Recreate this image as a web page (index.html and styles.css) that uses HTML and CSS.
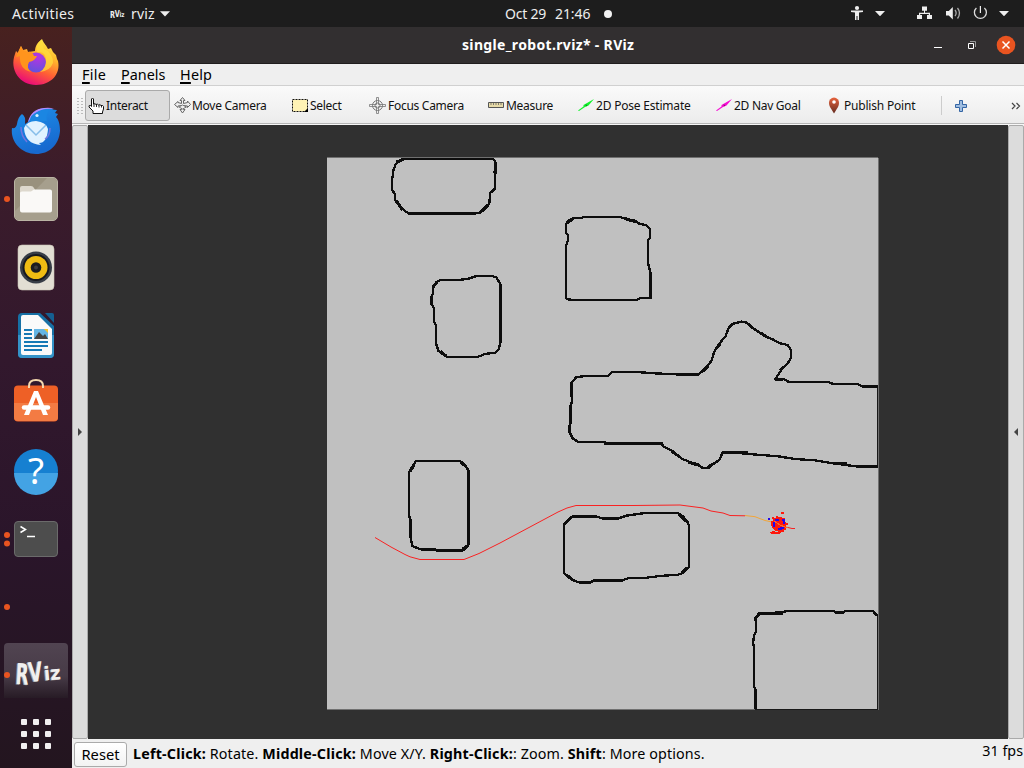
FILE: index.html
```html
<!DOCTYPE html>
<html lang="en">
<head>
<meta charset="utf-8">
<title>single_robot.rviz* - RViz</title>
<link rel="stylesheet" href="styles.css">
</head>
<body>
<div class="desktop">
  <header class="topbar">
    <span class="activities">Activities</span>
    <svg class="app-logo" width="16" height="12" viewBox="0 0 16 12"><g class="logo-mini"><text x="0" y="9.5" textLength="5" lengthAdjust="spacingAndGlyphs">R</text><text x="4.700" y="9" textLength="5" lengthAdjust="spacingAndGlyphs">V</text><text x="9.500" y="8.5" font-size="7" textLength="5" lengthAdjust="spacingAndGlyphs">iz</text></g></svg>
    <span class="app-name">rviz</span>
    <svg class="app-caret" width="10" height="6" viewBox="0 0 10 6"><path d="M0 .3h10L5 5.500z" fill="#eee"/></svg>
    <span class="date">Oct 29</span><span class="time">21:46</span><i class="notify"></i>
    <svg class="tray" width="170" height="27" viewBox="850 0 170 27" fill="#eee">
      <circle cx="857" cy="8" r="2.1"/><path d="M851 10.500h12v1.600l-4 .5V20h-1.500v-4h-1v4H855v-7.400l-4-.5z"/>
      <path d="M875 11h10l-5 5.200zM999 11h10l-5 5.200z"/>
      <path d="M922 6.500h5v4.300h-2v1.900h5v2.200h2v4h-5v-4h1.800v-1h-8.600v1h1.800v4h-5v-4h2v-2.200h5v-1.900h-2z"/>
      <path d="M946 11h2.800l4-4v12.500l-4-4H946z"/><path d="M955 10q2.300 3 0 6M957.500 8q4 5 0 10.500" fill="none" stroke="#aaa" stroke-width="1.300"/>
      <path d="M976.400 8a6 6 0 1 0 8 0" fill="none" stroke="#ddd" stroke-width="1.300"/><path d="M979.800 6h1.200v7h-1.200z"/>
    </svg>
  </header>
  <div class="workspace">
    <nav class="dock">
      <svg class="slot" viewBox="0 0 72 68">
        <defs>
          <linearGradient id="fox" x1=".8" y1="0" x2=".35" y2="1"><stop offset="0" stop-color="#fff14a"/><stop offset=".35" stop-color="#ffb52c"/><stop offset=".65" stop-color="#ff6034"/><stop offset="1" stop-color="#e9087b"/></linearGradient>
          <radialGradient id="globe" cx=".6" cy=".2" r=".9"><stop offset="0" stop-color="#b833e1"/><stop offset="1" stop-color="#5a55dc"/></radialGradient>
          <linearGradient id="bird" x1="0" y1="0" x2=".4" y2="1"><stop offset="0" stop-color="#1e91ea"/><stop offset="1" stop-color="#1769cf"/></linearGradient>
        </defs>
        <path d="M21 17l2 4 4-1 1 3 7-1c0-5 3-9 7-12 2 5 5 7 6 10l3-1 2 4 3 3 1 4 1 2c3 13-7 24-22 24C20 56 9 41 15 25l1-3 2 2z" fill="url(#fox)"/>
        <circle cx="36" cy="33.500" r="10" fill="url(#globe)"/>
        <path d="M21 17l2 4 5 2q4-1 6 4h3q-2 5-8 6-3 6 2 10-12-3-11-16l-4 1 3-7z" fill="#ff941d"/>
        <path d="M37 23q9-1 9 9 0 7-6 11 10-1 13-9 0-5-2-8l-3-4-4-2-3-9q-6 5-4 12z" fill="#ffdf3d" opacity=".7"/>
      </svg>
      <svg class="slot" viewBox="0 0 72 68">
        <path d="M12 31q4 1 5-4 1-7 5-10 4 2 3 10l3-2C31 16 38 10 48 11c5 1 6 2 9 2l-2 3 3 1-2 3c3 3 4 8 4 14-1 14-11 23-24 23-14 0-26-12-24-26" fill="url(#bird)"/>
        <path d="M28 25q3-13 16-14 6-1 10 1-12-1-18 4-3 5-8 9" fill="#b18cff"/>
        <path d="M29 25q2-8 8-10 6-3 13-3-5 6-3 12z" fill="#1b86e2"/>
        <circle cx="37" cy="18.500" r="1.600" fill="#d8f3ff"/>
        <path d="M24 31q3-7 12-7 10 1 12 8-1 14-9 14l2 2q-16-1-17-17" fill="#e1f2ff"/>
        <path d="M26 28l10 10 10-10" fill="none" stroke="#86bde9" stroke-width="1.500"/>
        <path d="M21 30q0 9 6 15M50 31q0 8-5 11" fill="none" stroke="#7375de" stroke-width="1.500"/>
      </svg>
      <svg class="slot" viewBox="0 0 72 68">
        <circle class="run" cx="7" cy="34" r="3"/>
        <rect x="14.500" y="12.500" width="43" height="43" rx="4.500" fill="#99917d" stroke="#bab4a4"/><path d="M15 46L47 13h7q3 1 3 4v35q-1 3-4 3H19q-4-1-4-4z" fill="#a69f8d"/>
        <path d="M20 23q0-2 2-2h9q2 0 3 2l1 2h15v5H20z" fill="#ddd8cd"/><path d="M20 28q0-1.500 2-1.500h9l3-2h16q2 0 2 2v19q0 2-2 2H22q-2 0-2-2z" fill="#faf9f7"/>
      </svg>
      <svg class="slot" viewBox="0 0 72 68">
        <rect x="18" y="12" width="36" height="45" rx="4" fill="#e2ded3" stroke="#c9c2b5" stroke-width=".6"/>
        <circle cx="36" cy="34.500" r="16" fill="#373d46"/><circle cx="36" cy="34.500" r="13.500" fill="#17191f"/><circle cx="36" cy="34.500" r="11.500" fill="#efbc13"/><circle cx="36" cy="34.500" r="5.300" fill="#1c1d20"/><circle cx="36" cy="34.500" r="2" fill="#3d3d3d"/>
      </svg>
      <svg class="slot" viewBox="0 0 72 68">
        <path d="M22 12h18l14 13v28q0 4-4 4H22q-4 0-4-4V16q0-4 4-4" fill="#1670a5"/><path d="M18 34h36v19q0 4-4 4H22q-4 0-4-4z" fill="#3493c8"/>
        <path d="M45 12h7q2 0 2 2v8z" fill="#155f91"/>
        <path d="M23 14h15l14 14v24q0 2-2 2H23q-2 0-2-2V16q0-2 2-2" fill="#fafafa"/>
        <path d="M24 29h8M24 33h8M24 37h8M24 41h24M24 45h24M24 49h18" stroke="#1679b5" stroke-width="2"/>
        <path d="M34 28h14v10H34z" fill="#64b5e4"/><path d="M34 38l5-7 4 4 2-2 3 5z" fill="#444"/><path d="M44 28h4v4z" fill="#f8c52b"/>
      </svg>
      <svg class="slot" viewBox="0 0 72 68">
        <rect x="14" y="16.500" width="44" height="36" rx="4" fill="#ee6026"/><path d="M14 34h44v14q0 4-4 4H18q-4 0-4-4z" fill="#f37b43"/>
        <path d="M29 19v-2q0-6 7-6t7 6v2" fill="none" stroke="#f5d8ae" stroke-width="2"/>
        <path d="M34 22h4l10 24h-5l-7-18-7 18h-5z" fill="#fff"/><path d="M24 38.500h24" fill="none" stroke="#fff" stroke-width="4.500" stroke-linecap="round"/>
      </svg>
      <svg class="slot" viewBox="0 0 72 68">
        <circle cx="36" cy="34" r="22" fill="#1680d1"/><path d="M14 36h44a22 22 0 0 1-44 0" fill="#43a3e4"/><text class="question" x="36" y="47" text-anchor="middle">?</text>
      </svg>
      <svg class="slot" viewBox="0 0 72 68">
        <circle class="run" cx="7" cy="30" r="3"/><circle class="run" cx="7" cy="38.500" r="3"/>
        <rect x="14.500" y="16.500" width="43" height="35" rx="3.500" fill="#4d4d4d" stroke="#6b6b6b"/><path d="M20.500 21.500l5 3-5 3M27 31.500h8" fill="none" stroke="#fff" stroke-width="1.500"/>
      </svg>
      <svg class="slot" viewBox="0 0 72 68"><circle class="run" cx="7" cy="34" r="3"/></svg>
      <svg class="slot" viewBox="0 0 72 68">
        <defs><linearGradient id="tile" x2="0" y2="1"><stop stop-color="#514451"/><stop offset=".6" stop-color="#473b47"/><stop offset="1" stop-color="#271b25"/></linearGradient></defs>
        <path d="M4 57V6q0-4 4-4h56q4 0 4 4v51z" fill="url(#tile)"/><circle class="run" cx="7" cy="34" r="3"/>
        <g class="logo-big" fill="#999"><text transform="translate(14.200 43.500) rotate(3) scale(.58 1)" font-size="29">R</text><text transform="translate(28 41.500) rotate(-5) scale(.68 1)" font-size="27">V</text><text transform="translate(43.500 40) rotate(-5) scale(.95 1)" font-size="19">iz</text></g>
        <g class="logo-big" fill="#f0f0f0"><text transform="translate(15.200 43) rotate(3) scale(.58 1)" font-size="29">R</text><text transform="translate(29 41) rotate(-5) scale(.68 1)" font-size="27">V</text><text transform="translate(44.500 39.500) rotate(-5) scale(.95 1)" font-size="19">iz</text></g>
      </svg>
      <svg class="launcher" viewBox="0 0 72 59" fill="#f1eff0"><g id="grid-row"><rect x="21" y="10" width="6" height="6" rx="1"/><rect x="33" y="10" width="6" height="6" rx="1"/><rect x="45" y="10" width="6" height="6" rx="1"/></g><use href="#grid-row" y="12"/><use href="#grid-row" y="24"/></svg>
    </nav>
    <main class="window">
      <div class="titlebar"><h1>single_robot.rviz* - RViz</h1>
        <svg class="controls" width="84" height="37" viewBox="932 27 84 37" fill="none"><path d="M934 47.500h8" stroke="#fff"/><path d="M968.500 43.500h5v5h-5z" stroke="#fff"/><path d="M970 41.500h5.500V47" stroke="#999"/><circle cx="1006" cy="45" r="9.300" fill="#e95420"/><path d="M1002.500 41.500l7 7m0-7l-7 7" stroke="#fff" stroke-width="1.500"/></svg>
      </div>
      <div class="menubar"><span class="m-file"><u>F</u>ile</span><span class="m-panels"><u>P</u>anels</span><span class="m-help"><u>H</u>elp</span></div>
      <div class="toolbar">
        <i class="grip"></i>
        <div class="tool interact"><svg width="18" height="18" viewBox="0 0 18 18"><path d="M3.500 2q1-2 2 0v5q1.500-1 2.500.5 1.500-1 2.500.5 1.500-1 2.500.5 2-.5 2.500 1V12l-1 3v1.500H5V14l-4-4Q.500 8 2.500 8.500l1 1z" fill="#fff" stroke="#111"/><path d="M6 7v3M8.500 7.500V10M11 8v2.500M13.500 8.500v2" stroke="#111" stroke-width=".9"/></svg><span>Interact</span></div>
        <div class="tool move"><svg width="17" height="17" viewBox="0 0 17 17"><path d="M8.500.5L11 3.500H9.500v3l4-1V4l3 3.500-3 3V9l-4-.5v4H11l-2.500 3.500L6 12.500h1.500v-4L4 9v1.500l-3.500-3 3.500-3v1l3.500 1v-3H6z" fill="#eee" stroke="#666"/><path d="M5 10l3.500 2 4-2-4-2z" fill="#eee" stroke="#777"/></svg><span>Move Camera</span></div>
        <div class="tool select"><svg width="17" height="17" viewBox="0 0 17 17"><path d="M.5 2.500h15v12H.5z" fill="#fff3b5" stroke="#111" stroke-dasharray="2 1"/><path d="M12 15l4-4v4z"/></svg><span>Select</span></div>
        <div class="tool focus"><svg width="18" height="18" viewBox="0 0 18 18"><g fill="none" stroke="#777"><path d="M7.500 7.500V.5h2v7h7v2h-7v7h-2v-7h-7v-2z" fill="#eee" stroke-width=".8"/><circle cx="8.500" cy="8.500" r="5"/><circle cx="8.500" cy="8.500" r="2.500"/></g></svg><span>Focus Camera</span></div>
        <div class="tool measure"><svg width="17" height="17" viewBox="0 0 17 17"><path d="M.5 5.500h15v5H.5z" fill="#e7dba9" stroke="#555"/><path d="M3 6v2M5.500 6v2M8 6v2M10.500 6v2M13 6v2" stroke="#555" stroke-width=".7"/></svg><span>Measure</span></div>
        <div class="tool pose"><svg width="17" height="17" viewBox="0 0 17 17"><path d="M0 13.500l5.500-4V8L16 2l-5.500 6.500L7 10l-6 4z" fill="#13f32c"/><path d="M7.500 7.500l2 .5-1.500 1.500z" fill="#087c23"/></svg><span>2D Pose Estimate</span></div>
        <div class="tool goal"><svg width="17" height="17" viewBox="0 0 17 17"><path d="M0 13.500l5.500-4V8L16 2l-5.500 6.500L7 10l-6 4z" fill="#f50bd2"/><path d="M7.500 7.500l2 .5-1.500 1.500z" fill="#8b096f"/></svg><span>2D Nav Goal</span></div>
        <div class="tool point"><svg width="14" height="17" viewBox="0 0 14 17"><defs><linearGradient id="pin" x2="0" y2="1"><stop stop-color="#e8633d"/><stop offset="1" stop-color="#652c20"/></linearGradient></defs><path d="M7 16.500L3 10Q1 5 3 2.500q4-4 8 0Q13 5 11 10z" fill="url(#pin)"/><circle cx="7" cy="5" r="1.800" fill="#fff"/></svg><span>Publish Point</span></div>
        <i class="divider"></i>
        <svg class="plus" width="14" height="14" viewBox="0 0 14 14"><path d="M5.500 1.500h3v4h4v3h-4v4h-3v-4h-4v-3h4z" fill="#9fbde0" stroke="#3465a4"/></svg>
        <svg class="more" width="10" height="8" viewBox="0 0 10 8" fill="none" stroke="#444" stroke-width="1.200"><path d="M1 1l3 3-3 3M5.500 1l3 3-3 3"/></svg>
      </div>
      <div class="content">
        <div class="handle left"><i></i></div>
        <svg class="view" width="920" height="614" viewBox="88 125 920 614" shape-rendering="crispEdges">
          <path d="M88 125h920v614H88z" fill="#303030"/><path d="M327 158h551v551H327z" fill="#c0c0c0"/><path d="M327 157.500h551M878.500 158v552M327 709.500h551" stroke="#707070"/>
          <path d="M877.500 386v81M877.500 615v95M755 709.500h123" stroke="#181818"/>
          <g class="walls" transform="translate(380 150) scale(.333333)">
            <path d="M75 26L60 32 47 42 40 62 36 92V120L44 130 46 150 60 168 75 184 88 191H280L300 188 315 177 328 160 331 128 346 115V72L343 66 346 55V35L337 26zM172 27h10"/>
            <path d="M720 201H610L605 205H580L565 212 558 224V248L564 256V270L558 287V444L565 448 580 450H770L780 444H812V370L804 340V270L810 264V238L800 226 775 220 765 212 745 209z"/>
            <path d="M180 390H238L265 386 290 378H337L350 383 362 405V575L355 600 345 608 315 612 290 622H202L195 614 175 602 168 580V525L162 515V475L155 462V438L159 432V412L168 398z"/>
            <path class="thick" d="M50 36l20-8M48 152l20 28M300 188l25-24M332 128l14-14M346 72V35M562 218l15-10M735 206l35 10M160 410l12-15M155 438v26M180 604l18 14"/>
          </g>
          <g class="walls" transform="translate(560 310) scale(.333333)">
            <path d="M953 230H908L895 223H822L805 216H687L672 208H646L665 178 685 157 693 143V120L683 105 660 100 640 89 618 80 595 65 575 52 561 38 545 35 520 41 507 51 497 78 475 105 462 127 455 152 437 175 415 194H368L285 190 230 186H157L143 198H75L48 202 34 220V245L36 275 32 285V340L28 350V365L38 385 56 397H135L136 401H307L308 408 340 425 365 446 385 454 395 461 418 467 430 475H445L460 462 478 450 488 427H520L565 432 655 439 705 447 765 451 820 460 895 470H953"/>
            <path class="thick" d="M505 55l12-12M565 42l10 10M600 68l20 12M470 115l10-14M430 182l15-15M660 182l12-12M646 208h24M34 220v25M28 345v20M136 401h170M335 424l15 10M385 456l30 9M490 428h74M820 460h40M442 474l16-12"/>
          </g>
          <g class="walls" transform="translate(360 450) scale(.333333)"><path d="M167 34H300L312 41 326 62V284L312 300 305 302H230L225 298H182L157 288 152 265 151 205 148 200V65L157 56z"/><path class="thick" d="M302 36l12 10M150 64l12-20M308 298l12-10M182 298h44"/></g>
          <g class="walls" transform="translate(550 490) scale(.333333)">
            <path d="M68 79H138L160 86H202L230 77 285 69H384L400 80 414 98 417 110V230L400 248 385 254 330 258 290 263 235 265 220 270H132L122 278H90L68 270 43 250V103L55 90zM617 657V600L612 590V470L609 460 612 435 618 425V395L615 385 627 370H670L680 366H705V363H850L865 370 888 363H968L983 378"/>
            <path class="thick" d="M48 98l17-17M66 80h72M160 86h40M386 72l24 22M394 249l18-15M48 254l18 14M132 271h88M617 384l12-14M630 370h70M855 368h28M970 366l10 9"/>
          </g>
          <g fill="none" stroke="#ff1010" stroke-width=".9" shape-rendering="auto"><path d="M375 537.500L391 547 405 554.500 410 556.800 420 559.500H464L479 553.500 500 543 558 512 567 508 576 505.500H633L680 505 703 508 711 511 723 513 730 515.500 745 515.800"/><path d="M745 515.500L755 516.700 765 520.500 777 523 788 527.500" stroke="#f7a229"/><path d="M788 527.500l4 1h3"/></g>
          <g fill="#ff180c"><path d="M772 517h2v1h2v-2h2v1h4v1h3v3l1 2h2v2h-2v5h-2v2h-3v1h-3v-2h-3l-3-3v-2h-1v-5h2zM781 512h3v2h-3zM770 532l3-1 3 1v2h-5zM776 532h4v2h-4z"/></g><path d="M775 520h3v1m4-1h2v4m0 4h-3v1h-3m-4-2v-5M768 519h2" fill="none" stroke="#2308e9" stroke-width="1.100"/><path d="M774 521l6 4 5 2 3 1" stroke="#f76a2a" fill="none"/>
        </svg>
        <div class="handle right"><i></i></div>
      </div>
      <footer class="status"><button>Reset</button><p><b>Left-Click:</b> Rotate. <b>Middle-Click:</b> Move X/Y. <b>Right-Click:</b>: Zoom. <b>Shift</b>: More options.</p><span class="fps">31 fps</span></footer>
    </main>
  </div>
</div>
</body>
</html>
```
FILE: styles.css
```css
* { box-sizing: border-box; }
body { margin: 0; font-family: "Noto Sans", sans-serif; color: #111; background: #1d1d1d; }
svg { display: block; flex-shrink: 0; }
span, p, h1 { white-space: nowrap; }
.desktop { width: 1024px; height: 768px; overflow: hidden; display: flex; flex-direction: column; }
.topbar { height: 27px; background: #1d1d1d; color: #eee; display: flex; align-items: center; font-size: 14px; }
.activities { width: 97px; padding-left: 12px; letter-spacing: .4px; }
.app-logo { margin-right: 5px; margin-left: 13px; }
.logo-mini, .logo-big { font-family: "DejaVu Sans", sans-serif; font-weight: 700; }
.logo-mini { fill: #eee; font-size: 8px; }
.app-name { width: 29px; letter-spacing: .2px; }
.app-caret { margin-right: 335px; }
.date { width: 50px; letter-spacing: -.2px; }
.time { width: 49px; letter-spacing: -.1px; }
.notify { width: 8px; height: 8px; border-radius: 50%; background: #f2f2f2; }
.tray { margin-left: auto; margin-right: 4px; }
.workspace { height: 741px; display: flex; }
.dock { width: 72px; padding-top: 2px; background: linear-gradient(#48211f 0, #3b1c2b 20%, #32182d 45%, #2a152a 70%, #23151f 100%); }
.slot { width: 72px; height: 68px; }
.launcher { width: 72px; height: 59px; }
.run { fill: #e95420; }
.question { font-family: "Noto Sans", sans-serif; font-size: 37px; fill: #fff; }
.window { width: 952px; display: flex; flex-direction: column; background: #efefef; }
.titlebar { height: 37px; background: #322f30; border-bottom: 1px solid #201e1e; display: flex; color: #fff; }
.titlebar h1 { margin: 0; padding-left: 390px; font-size: 14px; line-height: 36px; letter-spacing: .34px; }
.controls { margin-left: auto; margin-right: 8px; }
.menubar { height: 22px; background: #efefef; border-bottom: 1px solid #d0d0d0; display: flex; font-size: 14.4px; line-height: 21px; padding-left: 10px; color: #000; }
.menubar u { text-underline-offset: 2px; text-decoration-thickness: 2px; }
.m-file { width: 39px; letter-spacing: .3px; }
.m-panels { width: 59px; }
.m-help { letter-spacing: .2px; }
.toolbar { height: 38px; background: linear-gradient(#fafafa, #ececec); border-bottom: 1px solid #b6b6b6; display: flex; align-items: center; font-size: 12px; letter-spacing: -.28px; padding: 2px 0 0 4px; }
.grip { width: 9px; height: 18px; background: radial-gradient(circle, #bbb 0 .6px, transparent 1px) 0 0 / 4px 3px; }
.tool { height: 31px; display: flex; align-items: center; color: #111; }
.interact { width: 85px; background: #dcdcdc; border: 1px solid #aaa; border-radius: 3px; padding-left: 2px; }
.move { width: 122px; padding-left: 4px; }
.move svg { margin-right: 1px; }
.select { width: 77px; }
.focus { width: 119px; }
.measure { width: 90px; }
.pose { width: 138px; letter-spacing: -.2px; }
.goal { width: 111px; }
.point { width: 114px; letter-spacing: -.2px; }
.measure svg, .focus svg, .select svg { margin-right: 1px; }
.pose svg, .goal svg { margin-right: 1px; }
.point svg { margin-right: 3px; }
.divider { width: 1px; height: 19px; background: #ccc; }
.plus { margin-left: 12px; }
.more { margin-left: 43px; }
.content { height: 615px; display: flex; padding-top: 1px; background: #f7f7f7; }
.handle { width: 16px; background: #dcdcdc; border: 1px solid #aaa; border-radius: 2px; display: flex; align-items: center; justify-content: center; }
.handle i { border: 4px solid transparent; }
.left i { border-left: 4px solid #444; border-right: 0; }
.right i { border-right: 4px solid #444; border-left: 0; }
.walls { fill: none; stroke: #0d0d0d; stroke-width: 7; }
.thick { stroke-width: 9.5; }
.status { height: 29px; display: flex; font-size: 14.3px; color: #000; }
.status button { width: 53px; height: 25px; margin: 3px 0 0 2px; padding: 0 0 2px; border: 1px solid #aaa; border-radius: 3px; background: linear-gradient(#fff, #f3f3f3); font: 14.7px "Noto Sans", sans-serif; }
.status p { margin: 0 0 0 6px; line-height: 30px; letter-spacing: .11px; }
.status b { letter-spacing: .2px; }
.fps { margin-left: auto; margin-right: 1px; line-height: 24px; }
```
